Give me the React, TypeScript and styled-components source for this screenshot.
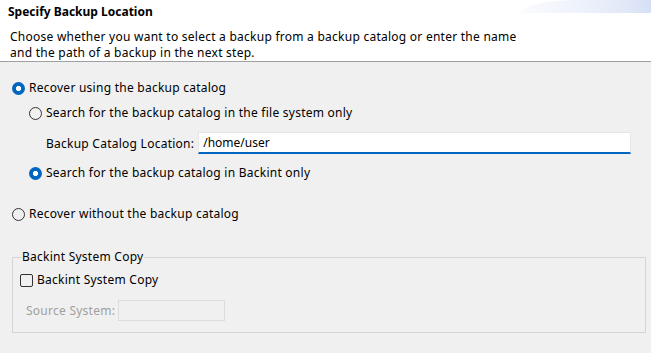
import React, { useState } from 'react';
import styled, { createGlobalStyle } from 'styled-components';

const GlobalStyle = createGlobalStyle`
  html, body {
    margin: 0;
    padding: 0;
    background: #f0f0f0;
  }
  body {
    font-family: "Noto Sans", "Liberation Sans", sans-serif;
    font-size: 12px;
    letter-spacing: 0.25px;
    color: #000;
  }
`;

const Page = styled.div`
  width: 651px;
  height: 353px;
  overflow: hidden;
  background: #f0f0f0;
`;

const Header = styled.div`
  background: #fff;
  border-bottom: 1px solid #a0a0a0;
`;

const TitleRow = styled.div`
  display: flex;
  justify-content: space-between;
  align-items: flex-start;
`;

const Title = styled.div`
  padding: 4px 0 0 8px;
  line-height: 16px;
  font-weight: bold;
  letter-spacing: 0;
`;

const Swoosh = styled.div`
  width: 131px;
  height: 13px;
  border-top-left-radius: 60px 13px;
  background: linear-gradient(90deg, #fbfcfe 0%, #eef2fb 45%, #e2e8f7 80%, #d6dff5 100%);
`;

const Description = styled.div`
  margin-top: 9px;
  padding-left: 10px;
  line-height: 16px;
  white-space: nowrap;
`;

const Body = styled.div`
  display: flex;
  flex-direction: column;
  padding: 18px 5px 0 12px;
`;

const Option = styled.label<{ $top: number }>`
  display: flex;
  align-items: center;
  gap: 4px;
  height: 16px;
  line-height: 16px;
  margin-top: ${(p) => p.$top}px;
  white-space: nowrap;
  cursor: default;
`;

const RadioMark = styled.span<{ $checked: boolean }>`
  box-sizing: border-box;
  width: 13px;
  height: 13px;
  border-radius: 50%;
  flex: none;
  ${(p) =>
    p.$checked
      ? `background: radial-gradient(circle, #fff 0 2.4px, #0067c0 2.9px);`
      : `border: 1px solid #333; background: transparent;`}
`;

const CheckMark = styled.span`
  box-sizing: border-box;
  width: 13px;
  height: 13px;
  border: 1px solid #333;
  border-radius: 2px;
  flex: none;
`;

const Indented = styled.div`
  display: flex;
  flex-direction: column;
  padding: 0 15px 0 17px;
`;

const FieldRow = styled.div`
  display: flex;
  align-items: center;
  margin-top: 11px;
  padding-left: 17px;
`;

const FieldLabel = styled.span<{ $disabled?: boolean }>`
  white-space: nowrap;
  color: ${(p) => (p.$disabled ? '#a0a0a0' : '#000')};
`;

const TextInput = styled.input`
  flex: 1;
  box-sizing: border-box;
  height: 22px;
  margin: 0 0 0 4px;
  padding: 0 4px;
  border: 1px solid #e6e6e6;
  border-bottom: 2px solid #0067c0;
  background: #fff;
  font: inherit;
  color: #000;
  outline: none;
`;

const Group = styled.fieldset`
  margin: 27px 0 0 0;
  padding: 0 7px 11px;
  border: 1px solid #d5d5d5;
  display: flex;
  flex-direction: column;
`;

const Legend = styled.legend`
  padding: 0 1px;
  margin-left: 1px;
  line-height: 16px;
`;

const SourceRow = styled.div`
  display: flex;
  align-items: center;
  margin-top: 12px;
  padding-left: 6px;
`;

const DisabledInput = styled.input`
  box-sizing: border-box;
  width: 107px;
  height: 21px;
  margin-left: 3px;
  border: 1px solid #dcdcdc;
  background: #f0f0f0;
  font: inherit;
`;

export default function App() {
  const [mode, setMode] = useState<'catalog' | 'none'>('catalog');
  const [search, setSearch] = useState<'fs' | 'backint'>('backint');
  const [location, setLocation] = useState('/home/user');

  return (
    <Page>
      <GlobalStyle />
      <Header>
        <TitleRow>
          <Title>Specify Backup Location</Title>
          <Swoosh />
        </TitleRow>
        <Description>
          Choose whether you want to select a backup from a backup catalog or enter the name
          <br />
          and the path of a backup in the next step.
        </Description>
      </Header>
      <Body>
        <Option $top={0} onClick={() => setMode('catalog')}>
          <RadioMark $checked={mode === 'catalog'} />
          Recover using the backup catalog
        </Option>
        <Indented>
          <Option $top={9} onClick={() => setSearch('fs')}>
            <RadioMark $checked={search === 'fs'} />
            Search for the backup catalog in the file system only
          </Option>
          <FieldRow>
            <FieldLabel>Backup Catalog Location:</FieldLabel>
            <TextInput value={location} onChange={(e) => setLocation(e.target.value)} />
          </FieldRow>
          <Option $top={11} onClick={() => setSearch('backint')}>
            <RadioMark $checked={search === 'backint'} />
            Search for the backup catalog in Backint only
          </Option>
        </Indented>
        <Option $top={25} onClick={() => setMode('none')}>
          <RadioMark $checked={mode === 'none'} />
          Recover without the backup catalog
        </Option>
        <Group>
          <Legend>Backint System Copy</Legend>
          <Option $top={7}>
            <CheckMark />
            Backint System Copy
          </Option>
          <SourceRow>
            <FieldLabel $disabled>Source System:</FieldLabel>
            <DisabledInput disabled />
          </SourceRow>
        </Group>
      </Body>
    </Page>
  );
}
